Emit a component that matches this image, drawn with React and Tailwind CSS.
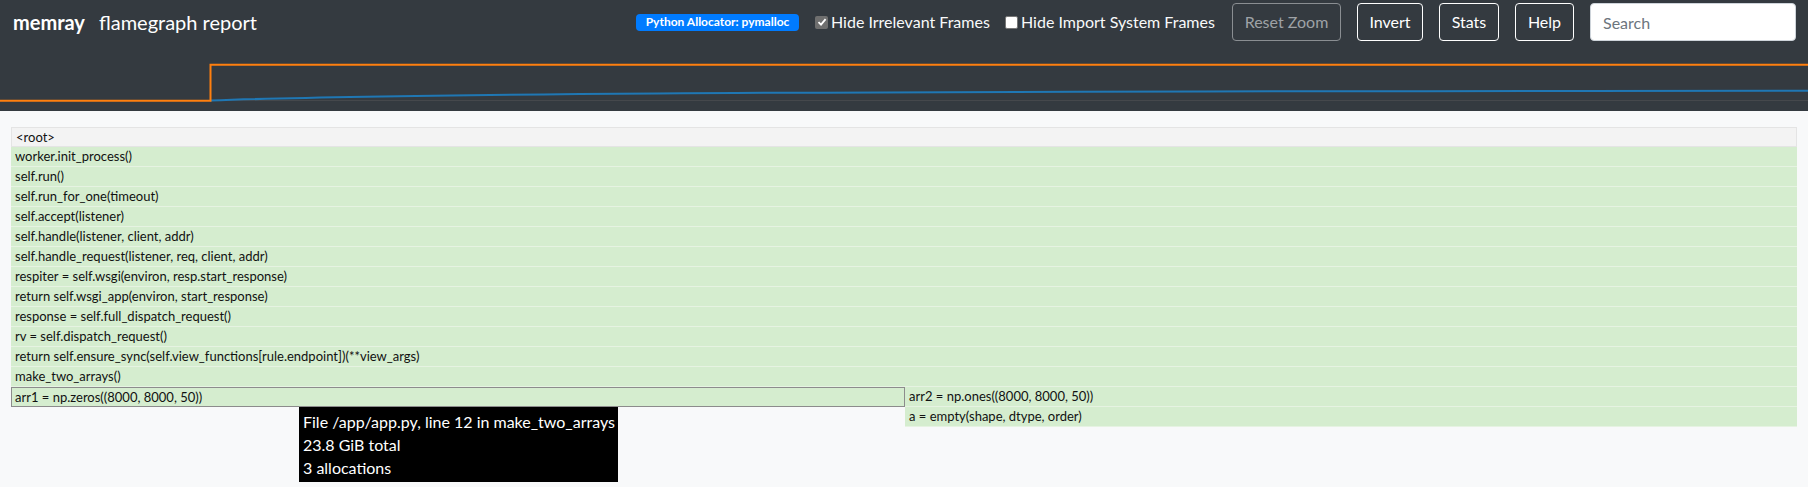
import React from 'react'

const FONT = { fontFamily: 'Lato, "Open Sans", "Liberation Sans", sans-serif' }

const frames = [
  'worker.init_process()',
  'self.run()',
  'self.run_for_one(timeout)',
  'self.accept(listener)',
  'self.handle(listener, client, addr)',
  'self.handle_request(listener, req, client, addr)',
  'respiter = self.wsgi(environ, resp.start_response)',
  'return self.wsgi_app(environ, start_response)',
  'response = self.full_dispatch_request()',
  'rv = self.dispatch_request()',
  'return self.ensure_sync(self.view_functions[rule.endpoint])(**view_args)',
  'make_two_arrays()',
]

function Checkbox({ checked }) {
  if (checked) {
    return (
      <span className="flex h-[13px] w-[13px] shrink-0 items-center justify-center rounded-[2px] bg-[#6f6f6f]">
        <svg width="10" height="10" viewBox="0 0 10 10">
          <path d="M1.5 5.2 L4 7.6 L8.6 2.2" fill="none" stroke="#fff" strokeWidth="1.8" />
        </svg>
      </span>
    )
  }
  return <span className="h-[13px] w-[13px] shrink-0 rounded-[2px] border border-[#767676] bg-white" />
}

function NavButton({ children, width, disabled }) {
  return (
    <button
      className={
        'h-[38px] shrink-0 rounded-[4px] border text-[16px] ' +
        (disabled ? 'border-[#8a8e92] text-[#9ea2a6]' : 'border-white text-white')
      }
      style={{ width }}
    >
      {children}
    </button>
  )
}

function Frame({ label }) {
  return (
    <div className="flex h-[20px] items-center border-b border-[#e6f3e2] bg-[#d5edcf] pl-[4px] pt-[1px] text-[13px] text-[#111]">
      <span className="whitespace-nowrap">{label}</span>
    </div>
  )
}

export default function App() {
  return (
    <div className="relative min-h-[487px] bg-[#f8f9fa]" style={FONT}>
      {/* Navbar */}
      <div className="bg-[#343a40]">
        <div className="flex h-[44px] items-center pl-[13px] pr-[12px]">
          <div className="flex items-baseline text-[20px] text-white">
            <span className="font-bold">memray</span>
            <span className="ml-[14px]">flamegraph report</span>
          </div>
          <div className="ml-auto flex items-center gap-4">
            <span className="flex h-[17px] w-[163px] shrink-0 items-center justify-center whitespace-nowrap rounded-[4px] bg-[#007bff] text-[12px] font-bold text-white">
              Python Allocator: pymalloc
            </span>
            <label className="flex w-[174px] shrink-0 items-center gap-[3px] whitespace-nowrap text-[16px] text-[#f8f9fa]">
              <Checkbox checked />
              <span>Hide Irrelevant Frames</span>
            </label>
            <label className="flex w-[211px] shrink-0 items-center gap-[3px] whitespace-nowrap text-[16px] text-[#f8f9fa]">
              <Checkbox />
              <span>Hide Import System Frames</span>
            </label>
            <NavButton width={109} disabled>Reset Zoom</NavButton>
            <NavButton width={66}>Invert</NavButton>
            <NavButton width={60}>Stats</NavButton>
            <NavButton width={59}>Help</NavButton>
            <input
              className="h-[38px] w-[206px] shrink-0 rounded-[4px] border border-[#ced4da] bg-white px-[12px] text-[16px] text-[#495057] placeholder:text-[#6c757d]"
              placeholder="Search"
            />
          </div>
        </div>
        {/* memory plot */}
        <div className="h-[67px]">
          <svg width="1808" height="67" viewBox="0 0 1808 67">
            <line x1="210" y1="56.5" x2="1808" y2="56.5" stroke="#45484c" strokeWidth="1" />
            <path d="M210 56.6 C 380 50, 700 47.4, 1808 46.7" fill="none" stroke="#1f77b4" strokeWidth="2" />
            <path d="M0 56.7 L210.5 56.7 L210.5 20.7 L1808 20.7" fill="none" stroke="#ff7f0e" strokeWidth="2" />
          </svg>
        </div>
      </div>

      {/* Flame graph */}
      <div className="px-[11px] pt-[16px]">
        <div className="w-[1786px]">
          <div className="flex h-[20px] items-center border border-[#e4e4e4] bg-[#f3f3f3] pl-[4px] pt-[1px] text-[13px] text-[#111]">
            &lt;root&gt;
          </div>
          {frames.map((f) => (
            <Frame key={f} label={f} />
          ))}
          <div className="flex">
            <div className="flex h-[20px] w-[894px] items-center border border-[#8c8c8c] bg-[#d5edcf] pl-[3px] pt-[1px] text-[13px] text-[#111]">
              arr1 = np.zeros((8000, 8000, 50))
            </div>
            <div className="flex-1">
              <Frame label="arr2 = np.ones((8000, 8000, 50))" />
              <Frame label="a = empty(shape, dtype, order)" />
            </div>
          </div>
        </div>
      </div>

      {/* Tooltip */}
      <div className="absolute left-[299px] top-[407px] w-[319px] whitespace-nowrap bg-black px-[4px] py-[3px] text-[16px] leading-[23px] text-white">
        <div>File /app/app.py, line 12 in make_two_arrays</div>
        <div>23.8 GiB total</div>
        <div>3 allocations</div>
      </div>
    </div>
  )
}
